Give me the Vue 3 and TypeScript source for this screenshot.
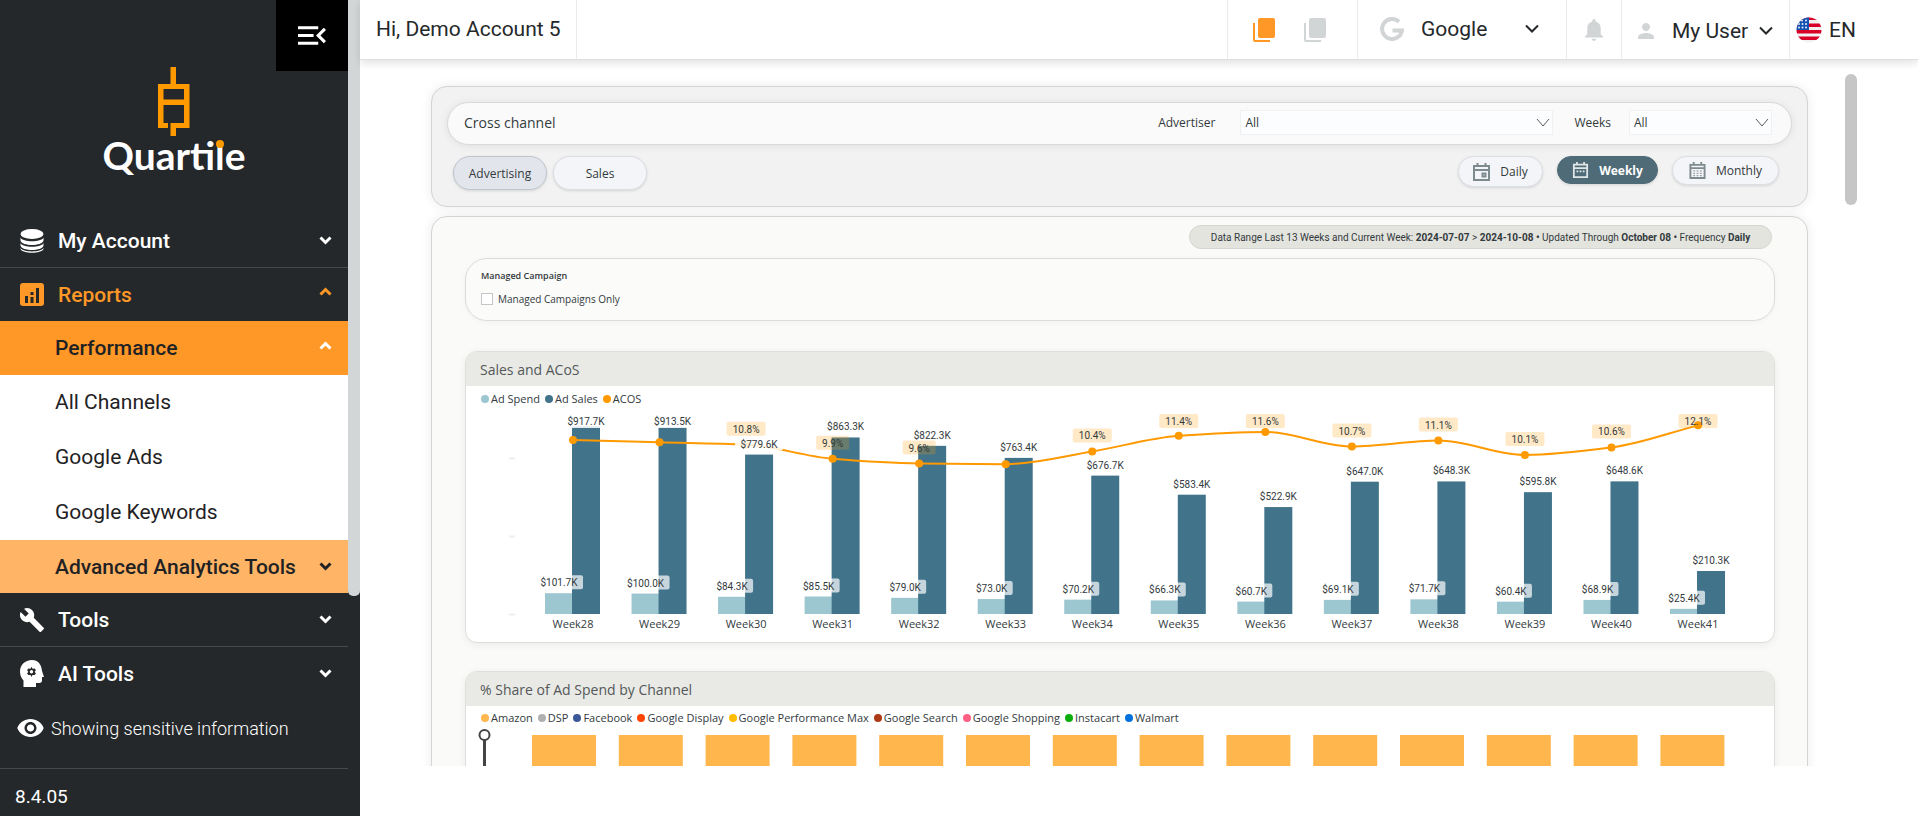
<script setup lang="ts">
interface WeekPoint {
  label: string
  spend: number
  sales: number
  /** ACoS, in percent, as plotted on the line */
  acos: number
  /** ACoS label; weeks without one have no room for it */
  tag?: string
}

const weeks: WeekPoint[] = [
  { label: 'Week28', spend: 101.7, sales: 917.7, acos: 11.1 },
  { label: 'Week29', spend: 100.0, sales: 913.5, acos: 10.95 },
  { label: 'Week30', spend: 84.3, sales: 779.6, acos: 10.8, tag: '10.8%' },
  { label: 'Week31', spend: 85.5, sales: 863.3, acos: 9.9, tag: '9.9%' },
  { label: 'Week32', spend: 79.0, sales: 822.3, acos: 9.6, tag: '9.6%' },
  { label: 'Week33', spend: 73.0, sales: 763.4, acos: 9.56 },
  { label: 'Week34', spend: 70.2, sales: 676.7, acos: 10.37, tag: '10.4%' },
  { label: 'Week35', spend: 66.3, sales: 583.4, acos: 11.36, tag: '11.4%' },
  { label: 'Week36', spend: 60.7, sales: 522.9, acos: 11.61, tag: '11.6%' },
  { label: 'Week37', spend: 69.1, sales: 647.0, acos: 10.68, tag: '10.7%' },
  { label: 'Week38', spend: 71.7, sales: 648.3, acos: 11.06, tag: '11.1%' },
  { label: 'Week39', spend: 60.4, sales: 595.8, acos: 10.14, tag: '10.1%' },
  { label: 'Week40', spend: 68.9, sales: 648.6, acos: 10.62, tag: '10.6%' },
  { label: 'Week41', spend: 25.4, sales: 210.3, acos: 12.03, tag: '12.1%' },
]

const base = 203
const barW = 28
const firstX = 107
const step = 86.54
const labelTop = 10

const money = (v: number): string => `$${v.toFixed(1)}K`

const plot = weeks.map((w, i) => {
  const x = firstX + i * step
  const spendH = w.spend * 0.2045
  const salesH = w.sales * 0.2045
  const y = base - 155.5 + (9.6 - w.acos) * 15.7 + 5
  return {
    ...w,
    x,
    y,
    spendH,
    salesH,
    spendLabelY: base - spendH - 11,
    salesLabelY: Math.max(labelTop, base - salesH - 11),
    tagY: Math.max(labelTop, y - 16),
    tagW: w.tag && w.tag.length > 4 ? 39 : 33,
    spendW: w.spend >= 100 ? 48 : 42,
  }
})

/** Monotone cubic path through the ACoS points */
function linePath(pts: { x: number; y: number }[]): string {
  const n = pts.length
  const d: number[] = []
  for (let i = 0; i < n - 1; i++) d.push((pts[i + 1].y - pts[i].y) / (pts[i + 1].x - pts[i].x))
  const m: number[] = [d[0]]
  for (let i = 1; i < n - 1; i++) {
    m.push(d[i - 1] * d[i] <= 0 ? 0 : (2 * d[i - 1] * d[i]) / (d[i - 1] + d[i]))
  }
  m.push(d[n - 2])
  let out = `M${pts[0].x} ${pts[0].y}`
  for (let i = 0; i < n - 1; i++) {
    const h = (pts[i + 1].x - pts[i].x) / 3
    out += ` C${pts[i].x + h} ${pts[i].y + m[i] * h} ${pts[i + 1].x - h} ${pts[i + 1].y - m[i + 1] * h} ${pts[i + 1].x} ${pts[i + 1].y}`
  }
  return out
}
const acosPath = linePath(plot)

const salesLegend = [
  { name: 'Ad Spend', color: '#9cc7d0' },
  { name: 'Ad Sales', color: '#41748b' },
  { name: 'ACOS', color: '#ff9900' },
]
const channelLegend = [
  { name: 'Amazon', color: '#ffb64c' },
  { name: 'DSP', color: '#b0b0b0' },
  { name: 'Facebook', color: '#3b5998' },
  { name: 'Google Display', color: '#ff4500' },
  { name: 'Google Performance Max', color: '#ffbc00' },
  { name: 'Google Search', color: '#ad3a15' },
  { name: 'Google Shopping', color: '#ff5f85' },
  { name: 'Instacart', color: '#0aad0a' },
  { name: 'Walmart', color: '#0071dc' },
]
const shareBars = weeks.map((w, i) => ({ label: w.label, x: 66 + i * 86.8 }))
const subItems = ['All Channels', 'Google Ads', 'Google Keywords']
</script>

<template>
  <div class="app">
    <aside class="sidebar">
      <div class="side-main">
        <div class="brand">
          <button class="toggle" type="button" aria-label="Collapse menu">
            <svg viewBox="3 6 18 12" width="28" height="19" fill="#fff"><path d="M3 18h13v-2H3v2zM3 6v2h13V6H3zm0 7h10v-2H3v2zM21 15.59 17.42 12 21 8.41 19.59 7l-5 5 5 5z" /></svg>
          </button>
          <svg class="mark" viewBox="0 0 32 70" width="32" height="70" fill="#ff9900">
            <path d="M12.500 0h5.500v17h13.500v44H18v8h-5.500V56H26V38H5.500v18H10v5H0V17h12.500zM5.500 22v10.500H26V22z" fill-rule="evenodd" />
          </svg>
          <div class="wordmark">Quart<span class="dotted">i</span>le</div>
        </div>

        <nav>
          <button class="row divided" type="button">
            <svg class="icon" viewBox="0 0 24 24" width="24" height="24" fill="#fff"><ellipse cx="12" cy="5" rx="11.500" ry="5" /><path d="M.5 8.500c2 5 21 5 23 0v3c-1 6-22 6-23 0zM.5 14c2 5 21 5 23 0v2.500c-1 6-22 6-23 0zM.5 19c2 4.500 21 4.500 23 0v1c-2 5-21 5-23 0z" /></svg>
            <span class="grow">My Account</span>
            <svg class="caret" viewBox="0 0 13 9" width="13" height="9"><path d="M1.500 1.500l5 5 5-5" /></svg>
          </button>
          <button class="row reports" type="button">
            <svg class="icon" viewBox="0 0 24 24" width="24" height="24"><rect width="24" height="23" rx="3" fill="#ff9827" /><path d="M5 13h3v7H5zM10.500 9h3v3h-3zM10.500 14h3v6h-3zM16 5h3v15h-3z" fill="#25282a" /></svg>
            <span class="grow">Reports</span>
            <svg class="caret raised" viewBox="0 0 13 9" width="13" height="9"><path d="M1.500 7.500l5-5 5 5" /></svg>
          </button>
          <button class="row sub performance" type="button">
            <span class="grow">Performance</span>
            <svg class="caret raised" viewBox="0 0 13 9" width="13" height="9"><path d="M1.500 7.500l5-5 5 5" /></svg>
          </button>
          <a v-for="s in subItems" :key="s" class="row sub leaf" href="#">{{ s }}</a>
          <button class="row sub advanced" type="button">
            <span class="grow">Advanced Analytics Tools</span>
            <svg class="caret" viewBox="0 0 13 9" width="13" height="9"><path d="M1.500 1.500l5 5 5-5" /></svg>
          </button>
          <button class="row divided" type="button">
            <svg class="icon" viewBox="1 1 22 22" width="24" height="24" fill="#fff"><path d="M22.700 19l-9.100-9.100c.9-2.300.4-5-1.500-6.900-2-2-5-2.400-7.400-1.300L9 6 6 9 1.600 4.700C.4 7.100.9 10.100 2.900 12.100c1.900 1.900 4.600 2.400 6.900 1.500l9.100 9.100c.4.400 1 .4 1.400 0l2.300-2.300c.5-.4.5-1.100.1-1.400z" /></svg>
            <span class="grow">Tools</span>
            <svg class="caret" viewBox="0 0 13 9" width="13" height="9"><path d="M1.500 1.500l5 5 5-5" /></svg>
          </button>
          <button class="row" type="button">
            <svg class="icon" viewBox="0 0 24 27" width="24" height="27">
              <path d="M12 0C5 0 0 5 0 11.500c0 4 1.500 7 3.500 9V27H16v-4h3.500c1.500 0 2.500-1 2.500-2.500V17h2l-2-6C21.500 4.500 18 0 12 0z" fill="#fff" />
              <path d="M11.500 6.800l1 2 2.200-.2 1.200 1.600-1.200 1.600 1.200 1.700-1.200 1.500-2.200-.1-1 2-1-2-2.200.1-1.200-1.500 1.200-1.700-1.200-1.600 1.200-1.600 2.200.2z" fill="#25282a" />
              <circle cx="11.500" cy="11.800" r="1.700" fill="#fff" />
            </svg>
            <span class="grow">AI Tools</span>
            <svg class="caret" viewBox="0 0 13 9" width="13" height="9"><path d="M1.500 1.500l5 5 5-5" /></svg>
          </button>
        </nav>

        <button class="sensitive" type="button">
          <svg viewBox="1 4.500 22 15" width="27" height="18" fill="#fff"><path d="M12 4.500C7 4.500 2.730 7.610 1 12c1.730 4.390 6 7.500 11 7.500s9.270-3.110 11-7.500c-1.730-4.390-6-7.500-11-7.500zM12 17c-2.760 0-5-2.240-5-5s2.240-5 5-5 5 2.240 5 5-2.240 5-5 5zm0-8c-1.660 0-3 1.340-3 3s1.340 3 3 3 3-1.340 3-3-1.340-3-3-3z" /></svg>
          Showing sensitive information
        </button>
        <div class="version">8.4.05</div>
      </div>
      <div class="side-track"><div class="side-thumb"></div></div>
    </aside>

    <main class="main">
      <header class="topbar">
        <div class="hello">Hi, Demo Account 5</div>
        <div class="cell copies">
          <button type="button" aria-label="Linked accounts">
            <svg viewBox="0 0 22 24" width="22" height="24" fill="#ff9827"><rect x="5" width="17" height="20" rx="2" /><path d="M0 5h2v17h15v2H2a2 2 0 0 1-2-2z" /></svg>
          </button>
          <button type="button" aria-label="All accounts">
            <svg viewBox="0 0 22 24" width="22" height="24" fill="#d2d5d6"><rect x="5" width="17" height="20" rx="2" /><path d="M0 5h2v17h15v2H2a2 2 0 0 1-2-2z" /></svg>
          </button>
        </div>
        <button class="cell channel" type="button">
          <svg viewBox="0 0 24 24" width="24" height="24" fill="none" stroke="#d2d5d6" stroke-width="4"><path d="M19 4.700A10 10 0 1 0 22 13.500h-9.500" /></svg>
          <span class="grow">Google</span>
          <svg class="top-caret" viewBox="0 0 14 9" width="14" height="9"><path d="M1 1.500l6 6 6-6" /></svg>
        </button>
        <button class="cell bell" type="button" aria-label="Notifications">
          <svg viewBox="4 2.500 16 19.500" width="18" height="22" fill="#d2d5d6"><path d="M12 22c1.100 0 2-.9 2-2h-4c0 1.100.9 2 2 2zm6-6v-5c0-3.070-1.630-5.640-4.500-6.320V4c0-.83-.67-1.500-1.500-1.500s-1.500.67-1.500 1.500v.68C7.640 5.360 6 7.920 6 11v5l-2 2v1h16v-1l-2-2z" /></svg>
        </button>
        <button class="cell user" type="button">
          <svg viewBox="4 4 16 16" width="16" height="16" fill="#d2d5d6"><path d="M12 12c2.210 0 4-1.790 4-4s-1.790-4-4-4-4 1.790-4 4 1.790 4 4 4zm0 2c-2.670 0-8 1.340-8 4v2h16v-2c0-2.660-5.330-4-8-4z" /></svg>
          <span class="grow">My User</span>
          <svg class="top-caret" viewBox="0 0 14 9" width="14" height="9"><path d="M1 1.500l6 6 6-6" /></svg>
        </button>
        <button class="cell lang" type="button">
          <svg viewBox="0 0 26 26" width="26" height="26">
            <defs><clipPath id="flag-disc"><circle cx="13" cy="13" r="12.500" /></clipPath></defs>
            <g clip-path="url(#flag-disc)">
              <rect width="26" height="26" fill="#f3f0f1" />
              <path d="M0 0h26v3H0zM0 6.500h26V10H0zM0 13h26v3.500H0zM0 19.500h26V23H0z" fill="#d80027" />
              <rect width="13" height="13" fill="#1452b4" />
              <g fill="#e8eef8"><circle cx="6" cy="3.500" r="1" /><circle cx="10" cy="3.500" r="1" /><circle cx="3" cy="7" r="1" /><circle cx="6.500" cy="7" r="1" /><circle cx="10" cy="7" r="1" /><circle cx="3" cy="10.500" r="1" /><circle cx="6.500" cy="10.500" r="1" /><circle cx="10" cy="10.500" r="1" /></g>
            </g>
          </svg>
          EN
        </button>
      </header>

      <div class="viewport">
        <div class="report">
          <section class="panel filters">
            <div class="channel-bar">
              <h1>Cross channel</h1>
              <label for="advertiser">Advertiser</label>
              <div class="picker wide">
                <select id="advertiser"><option>All</option></select>
                <svg viewBox="0 0 14 9" width="14" height="9"><path d="M1 1l6 7 6-7" /></svg>
              </div>
              <label for="weeks">Weeks</label>
              <div class="picker">
                <select id="weeks"><option>All</option></select>
                <svg viewBox="0 0 14 9" width="14" height="9"><path d="M1 1l6 7 6-7" /></svg>
              </div>
            </div>
            <div class="controls">
              <button class="tab active" type="button">Advertising</button>
              <button class="tab" type="button">Sales</button>
              <span class="grow"></span>
              <button class="freq daily" type="button">
                <svg viewBox="0 0 17 18" width="17" height="18"><path d="M1 3h15v14H1zM1 7h15M4.500 0v4M12.500 0v4" /><rect x="9.500" y="10.500" width="3" height="3" /></svg>
                Daily
              </button>
              <button class="freq weekly" type="button">
                <svg viewBox="0 0 17 18" width="17" height="16"><path d="M1 3h15v14H1zM1 7h15M4.500 0v4M12.500 0v4M4 10.500h2M7.500 10.500h2M11 10.500h2" /></svg>
                Weekly
              </button>
              <button class="freq monthly" type="button">
                <svg viewBox="0 0 17 18" width="17" height="17"><path d="M1 3h15v14H1zM1 6.500h15M4.500 0v4M12.500 0v4" /><path class="fine" d="M4 9.500h2M7.500 9.500h2M11 9.500h2M4 12h2M7.500 12h2M11 12h2M4 14.500h2M7.500 14.500h2M11 14.500h2" /></svg>
                Monthly
              </button>
            </div>
          </section>

          <section class="panel body">
            <p class="range">Data Range Last 13 Weeks and Current Week: <b>2024-07-07</b> &gt; <b>2024-10-08</b> <b>•</b> Updated Through <b>October 08</b> <b>•</b> Frequency <b>Daily</b></p>

            <div class="managed">
              <h2>Managed Campaign</h2>
              <label><input type="checkbox" />Managed Campaigns Only</label>
            </div>

            <article class="card sales">
              <h2>Sales and ACoS</h2>
              <ul class="legend">
                <li v-for="l in salesLegend" :key="l.name"><svg viewBox="0 0 8 8" width="8" height="8"><circle cx="4" cy="4" r="4" :fill="l.color" /></svg>{{ l.name }}</li>
              </ul>
              <svg class="chart" viewBox="0 0 1308 220" role="img" aria-label="Sales and ACoS by week">
                <path d="M43 47.500h6M43 125.500h6M43 203.500h6" stroke="#efefef" stroke-width="2" />
                <g v-for="p in plot" :key="p.label">
                  <rect :x="p.x - barW" :y="base - p.spendH" :width="barW" :height="p.spendH" fill="#9cc7d0" />
                  <rect :x="p.x - 1" :y="base - p.salesH" :width="barW" :height="p.salesH" fill="#41748b" />
                  <text class="week" :x="p.x" y="217">{{ p.label }}</text>
                </g>
                <path :d="acosPath" fill="none" stroke="#ff9900" stroke-width="2" />
                <circle v-for="p in plot" :key="p.label" :cx="p.x" :cy="p.y" r="4" fill="#ff9900" />
                <g v-for="p in plot" :key="p.label">
                  <rect :x="p.x - 14 - p.spendW / 2" :y="p.spendLabelY - 7" :width="p.spendW" height="14" rx="2" fill="#fff" fill-opacity=".7" />
                  <rect :x="p.x - 11" :y="p.salesLabelY - 7" width="48" height="14" rx="2" fill="#fff" fill-opacity=".85" />
                  <rect v-if="p.tag" :x="p.x - p.tagW / 2" :y="p.tagY - 7" :width="p.tagW" height="14" rx="2" fill="#ff9900" fill-opacity=".22" />
                  <text class="value" :x="p.x - 14" :y="p.spendLabelY + 4">{{ money(p.spend) }}</text>
                  <text class="value" :x="p.x + 13" :y="p.salesLabelY + 4">{{ money(p.sales) }}</text>
                  <text v-if="p.tag" class="value" :x="p.x" :y="p.tagY + 4">{{ p.tag }}</text>
                </g>
              </svg>
            </article>

            <article class="card share">
              <h2>% Share of Ad Spend by Channel</h2>
              <ul class="legend">
                <li v-for="l in channelLegend" :key="l.name"><svg viewBox="0 0 8 8" width="8" height="8"><circle cx="4" cy="4" r="4" :fill="l.color" /></svg>{{ l.name }}</li>
              </ul>
              <svg class="chart" viewBox="0 0 1308 200" role="img" aria-label="Share of ad spend by channel">
                <path d="M18.500 10v190" stroke="#444" stroke-width="3" />
                <circle cx="18.500" cy="5" r="5" fill="#fff" stroke="#444" stroke-width="2" />
                <rect v-for="b in shareBars" :key="b.label" :x="b.x" y="5" width="64" height="195" fill="#ffb64c" />
              </svg>
            </article>
          </section>
        </div>
        <div class="view-thumb"></div>
      </div>
    </main>
  </div>
</template>

<style>
body {
  margin: 0;
  background: #fff;
}
</style>

<style scoped>
* {
  box-sizing: border-box;
}
button {
  margin: 0;
  padding: 0;
  border: 0;
  background: none;
  color: inherit;
  font: inherit;
  text-align: left;
  cursor: pointer;
}
svg {
  display: block;
  flex: none;
}
.app {
  display: flex;
  height: 100vh;
  overflow: hidden;
  font-family: Roboto, "Liberation Sans", sans-serif;
  font-size: 21px;
  color: #25282a;
}
.grow {
  flex: 1;
}

/* Sidebar */
.sidebar {
  display: flex;
  flex: none;
  width: 360px;
  background: #25282a;
  color: #fff;
}
.side-main {
  flex: 1;
  display: flex;
  flex-direction: column;
}
.side-track {
  width: 12px;
}
.side-thumb {
  height: 73vh;
  background: #d2d6d7;
  border-radius: 0 0 5px 5px;
}
.brand {
  position: relative;
  display: flex;
  flex-direction: column;
  align-items: center;
  height: 214px;
  padding-top: 67px;
}
.toggle {
  position: absolute;
  top: 0;
  right: 0;
  display: flex;
  align-items: center;
  justify-content: center;
  width: 72px;
  height: 71px;
  background: #000;
}
.wordmark {
  margin-top: -2px;
  font: 700 39px/40px Lato, "Liberation Sans", sans-serif;
}
.dotted {
  position: relative;
}
.dotted::after {
  content: "";
  position: absolute;
  top: 8px;
  left: 1px;
  width: 8px;
  height: 8px;
  border-radius: 50%;
  background: #ff9900;
}
nav {
  display: flex;
  flex-direction: column;
}
.row {
  display: flex;
  align-items: center;
  height: 53px;
  padding: 0 16px 0 20px;
  font-weight: 500;
  color: #fff;
  text-decoration: none;
}
.row.divided {
  height: 54px;
  border-bottom: 1px solid #454b4d;
}
.icon {
  margin-right: 14px;
}
.caret {
  fill: none;
  stroke: currentColor;
  stroke-width: 3;
}
.raised {
  margin-bottom: 6px;
}
.row.reports {
  color: #ff9827;
}
.row.sub {
  height: 54px;
  padding-left: 55px;
  color: #1f2224;
}
.row.performance {
  background: #ff9827;
}
.row.performance .caret {
  color: #fff;
}
.row.sub.leaf {
  height: 55px;
  padding-bottom: 2px;
  background: #fff;
  font-weight: 400;
}
.row.sub.advanced {
  height: 53px;
  background: #ffb565;
}
.sensitive {
  display: flex;
  align-items: center;
  gap: 7px;
  height: 56px;
  padding-left: 17px;
  font-size: 18px;
  font-weight: 300;
}
.version {
  margin-top: 12px;
  padding: 16px 15px 0;
  border-top: 1px solid #454b4d;
  font-size: 19px;
  line-height: 24px;
}

/* Top bar */
.main {
  display: flex;
  flex: 1;
  flex-direction: column;
  min-width: 0;
}
.topbar {
  position: relative;
  z-index: 1;
  display: flex;
  flex: none;
  height: 60px;
  background: #fff;
  border-bottom: 1px solid #e0e0e0;
  box-shadow: 0 3px 8px rgba(0, 0, 0, .12);
  line-height: 58px;
}
.hello {
  padding: 0 15px 0 16px;
  border-right: 1px solid #ebebeb;
  margin-right: auto;
}
.cell {
  display: flex;
  align-items: center;
  border-left: 1px solid #ebebeb;
}
.copies {
  width: 130px;
  gap: 29px;
  padding-left: 25px;
}
.channel {
  width: 209px;
  gap: 17px;
  padding: 0 27px 2px 22px;
}
.bell {
  width: 55px;
  justify-content: center;
}
.user {
  width: 168px;
  gap: 10px;
  padding: 2px 16px 0 16px;
}
.user .grow {
  padding-left: 8px;
}
.lang {
  width: 129px;
  gap: 7px;
  padding-left: 6px;
}
.top-caret {
  fill: none;
  stroke: #25282a;
  stroke-width: 2;
}

/* Embedded report */
.viewport {
  display: flex;
  flex: 1;
  min-height: 0;
  margin-bottom: 50px;
  padding: 14px 61px 0 71px;
  overflow: hidden;
}
.report {
  flex: 1;
  min-width: 0;
  padding-top: 12px;
  font-family: "Open Sans", "Noto Sans", sans-serif;
  font-size: 12px;
  color: #333a3d;
}
.view-thumb {
  width: 12px;
  height: 131px;
  margin-left: 37px;
  border-radius: 6px;
  background: #c6c6c6;
}
.panel {
  border: 1px solid #d2d4d5;
  border-radius: 16px;
  box-shadow: 0 0 12px rgba(0, 0, 0, .08);
}
.filters {
  height: 121px;
  padding: 15px;
  background: #f2f2f2;
}
.channel-bar {
  display: flex;
  align-items: center;
  height: 43px;
  padding: 0 19px 2px 16px;
  border: 1px solid #d9dad5;
  border-radius: 22px;
  background: #fafafa;
  box-shadow: 0 1px 8px rgba(0, 0, 0, .08);
}
h1,
h2,
p,
ul {
  margin: 0;
  padding: 0;
}
h1 {
  flex: 1;
  font-size: 14px;
  font-weight: 500;
}
.picker {
  display: grid;
  align-items: center;
  width: 143px;
  margin-left: 18px;
}
.picker.wide {
  width: 313px;
  margin: 0 21px 0 25px;
}
.picker > * {
  grid-area: 1 / 1;
}
.picker select {
  height: 25px;
  padding: 0 20px 0 4px;
  border: 1px solid #f0f1f3;
  border-radius: 0;
  background: #fcfdfe;
  appearance: none;
  color: inherit;
  font: inherit;
}
.picker svg {
  justify-self: end;
  margin-right: 3px;
  fill: none;
  stroke: #555a5e;
  pointer-events: none;
}
.controls {
  display: flex;
  align-items: flex-start;
  padding: 11px 13px 0 6px;
}
.tab,
.freq {
  border: 1px solid #dcdfe3;
  background: #f4f5f8;
  box-shadow: 0 1px 3px rgba(0, 0, 0, .12);
}
.tab {
  width: 94px;
  height: 34px;
  margin-right: 6px;
  border-radius: 17px;
  text-align: center;
}
.tab.active {
  border-color: #bfc7cc;
  background: #e2e6ec;
  font-weight: 500;
}
.freq {
  display: flex;
  align-items: center;
  justify-content: center;
  gap: 10px;
  height: 31px;
  min-width: 85px;
  margin-left: 14px;
  border-radius: 16px;
}
.freq svg {
  fill: none;
  stroke: #7d8b8f;
  stroke-width: 2;
}
.freq .fine {
  stroke-width: 1;
}
.freq.weekly {
  height: 28px;
  min-width: 101px;
  border-color: #4f6b77;
  background: #4f6b77;
  color: #fff;
  font-weight: 700;
}
.freq.weekly svg {
  stroke: #dfe6e8;
}
.freq.monthly {
  height: 29px;
  min-width: 107px;
}
.body {
  display: flex;
  flex-direction: column;
  height: 760px;
  margin-top: 9px;
  padding: 8px 32px 0 33px;
  background: #fafaf8;
}
.range {
  align-self: flex-end;
  min-width: 583px;
  height: 24px;
  margin-right: 3px;
  padding: 0 20px;
  border: 1px solid #d5d7d0;
  border-radius: 12px;
  background: #e3e4de;
  font-family: Roboto, "Open Sans", sans-serif;
  font-size: 10px;
  line-height: 23px;
  text-align: center;
  white-space: nowrap;
}
.managed {
  height: 63px;
  margin-top: 9px;
  padding: 8px 15px;
  border: 1px solid #dcddd9;
  border-radius: 22px;
  background: #fbfbf9;
  box-shadow: 0 1px 6px rgba(0, 0, 0, .04);
}
.managed h2 {
  font-size: 9px;
  font-weight: 600;
  line-height: 18px;
}
.managed label {
  display: flex;
  align-items: center;
  gap: 5px;
  margin-top: 5px;
  font-size: 10px;
  line-height: 18px;
}
.managed input {
  width: 12px;
  height: 12px;
  margin: 0;
  border: 1px solid #c4c6c8;
  background: #fff;
  appearance: none;
}
.card {
  border: 1px solid #dedfdb;
  border-radius: 12px;
  background: #fff;
  box-shadow: 0 2px 8px rgba(0, 0, 0, .06);
  overflow: hidden;
  flex: none;
}
.card h2 {
  height: 34px;
  padding-left: 14px;
  background: #e9eae5;
  font-size: 14px;
  font-weight: 500;
  line-height: 35px;
  color: #54585a;
}
.card.sales {
  height: 292px;
  margin-top: 30px;
}
.card.share {
  margin-top: 28px;
}
.legend {
  display: flex;
  gap: 5px;
  height: 24px;
  padding-left: 15px;
  list-style: none;
  font-size: 11px;
  line-height: 24px;
}
.sales .legend {
  height: 25px;
  padding-top: 1px;
}
.legend li {
  display: flex;
  align-items: center;
  gap: 2px;
}
.chart {
  width: 100%;
  height: auto;
  overflow: visible;
}
.week {
  font-size: 11px;
  text-anchor: middle;
  fill: #333a3d;
}
.value {
  font-family: Roboto, "Liberation Sans", sans-serif;
  font-size: 10px;
  text-anchor: middle;
  fill: #333a3d;
}
</style>
